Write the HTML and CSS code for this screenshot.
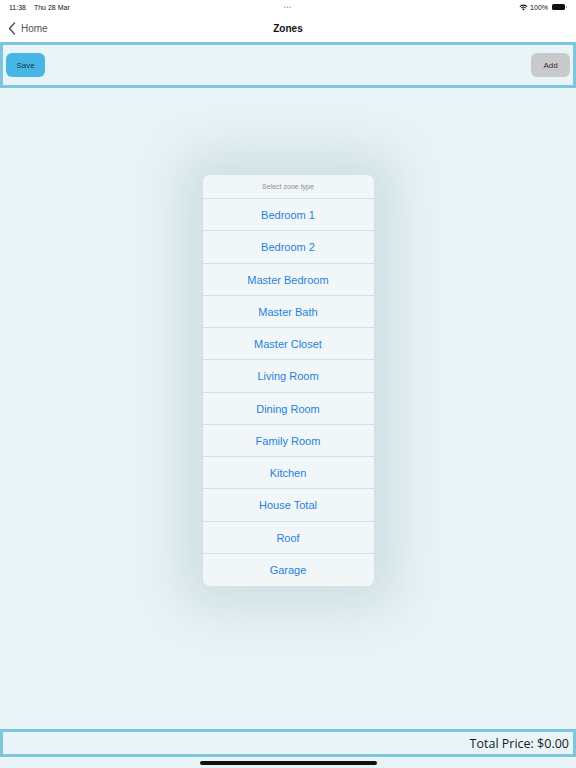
FILE: index.html
```html
<!DOCTYPE html>
<html lang="en">

<head>
    <meta charset="UTF-8">
    <meta name="viewport" content="width=device-width, initial-scale=1.0">
    <title>Zones</title>
    <link rel="stylesheet" href="styles.css">
</head>

<body>
    <div class="statusbar">
        <div class="status-left">
            <span>11:38</span>
            <span class="date">Thu 28 Mar</span>
        </div>
        <div class="dots">&bull;&bull;&bull;</div>
        <div class="status-right">
            <svg width="9" height="7" viewBox="0 0 12 9">
                <path d="M6 8.6 L4.2 6.6 A2.6 2.6 0 0 1 7.8 6.6 Z" fill="#111" />
                <path d="M2.6 4.9 A4.8 4.8 0 0 1 9.4 4.9 L8.5 5.9 A3.5 3.5 0 0 0 3.5 5.9 Z" fill="#111" />
                <path d="M0.6 2.9 A7.6 7.6 0 0 1 11.4 2.9 L10.5 3.9 A6.3 6.3 0 0 0 1.5 3.9 Z" fill="#111" />
            </svg>
            <span>100%</span>
            <span class="battery"></span>
        </div>
    </div>

    <header class="navbar">
        <div class="back">
            <svg width="8" height="13" viewBox="0 0 8 13">
                <path d="M6.5 1 L1.5 6.5 L6.5 12" fill="none" stroke="#555" stroke-width="1.5" stroke-linecap="round" stroke-linejoin="round" />
            </svg>
            <span>Home</span>
        </div>
        <h1>Zones</h1>
    </header>

    <div class="toolbar">
        <button class="btn btn-save">Save</button>
        <button class="btn btn-add">Add</button>
    </div>

    <main class="content">
        <div class="picker">
            <div class="picker-title">Select zone type</div>
            <ul>
                <li>Bedroom 1</li>
                <li>Bedroom 2</li>
                <li>Master Bedroom</li>
                <li>Master Bath</li>
                <li>Master Closet</li>
                <li>Living Room</li>
                <li>Dining Room</li>
                <li>Family Room</li>
                <li>Kitchen</li>
                <li>House Total</li>
                <li>Roof</li>
                <li>Garage</li>
            </ul>
        </div>
    </main>

    <footer class="total">Total Price: $0.00</footer>
    <div class="home-bar"><span></span></div>
</body>

</html>
```

FILE: styles.css
```css
* {
    box-sizing: border-box;
}

html,
body {
    margin: 0;
    padding: 0;
}

body {
    width: 576px;
    height: 768px;
    background: #e8f3f6;
    font-family: "Liberation Sans", Arial, sans-serif;
    display: flex;
    flex-direction: column;
    overflow: hidden;
}

ul {
    margin: 0;
    padding: 0;
    list-style: none;
}

.statusbar {
    height: 14px;
    background: #fff;
    display: grid;
    grid-template-columns: 1fr auto 1fr;
    align-items: center;
    padding: 0 9px;
    font-size: 7px;
    color: #111;
}

.status-left .date {
    margin-left: 6px;
}

.dots {
    color: #999;
    font-size: 5px;
    letter-spacing: 1px;
}

.status-right {
    display: flex;
    align-items: center;
    justify-content: flex-end;
    gap: 2px;
}

.battery {
    width: 13px;
    height: 6px;
    margin-left: 2px;
    margin-right: 2px;
    border-radius: 1.5px;
    background: #111;
    position: relative;
}

.battery::after {
    content: "";
    position: absolute;
    right: -2px;
    top: 2px;
    width: 1px;
    height: 2px;
    background: #aaa;
}

.navbar {
    height: 28px;
    background: #fff;
    position: relative;
    display: flex;
    align-items: center;
    justify-content: center;
}

.back {
    position: absolute;
    left: 8px;
    top: 8px;
    display: flex;
    align-items: center;
    gap: 5px;
    font-size: 10px;
    color: #555;
}

.navbar h1 {
    margin: 0;
    font-size: 10px;
    font-weight: bold;
    color: #111;
}

.toolbar {
    height: 46px;
    border: 3px solid #7ec6df;
    background: #e8f4f7;
    display: flex;
    align-items: center;
    justify-content: space-between;
    padding: 0 3px;
}

.btn {
    width: 39px;
    height: 24px;
    border: none;
    border-radius: 6px;
    font-family: "Liberation Sans", Arial, sans-serif;
    font-size: 8px;
    padding: 0;
}

.btn-save {
    background: #47b6e5;
    color: #123a55;
}

.btn-add {
    background: #c8c9ca;
    color: #333;
}

.content {
    flex: 1;
    display: flex;
    justify-content: center;
    padding-top: 87px;
}

.picker {
    width: 171px;
    height: 411px;
    background: #f1f6f8;
    border-radius: 7px;
    box-shadow: 0 0 50px 20px rgba(170, 195, 200, 0.45);
    overflow: hidden;
}

.picker-title {
    height: 24px;
    line-height: 24px;
    text-align: center;
    font-size: 7px;
    color: #8a8f93;
    border-bottom: 1px solid #d6dee2;
}

.picker li {
    height: 32.25px;
    line-height: 32px;
    text-align: center;
    font-size: 11px;
    color: #1f82dc;
    border-bottom: 1px solid #d6dee2;
}

.picker li:last-child {
    border-bottom: none;
}

.total {
    height: 28px;
    margin-bottom: 3px;
    border: 3px solid #7ec6df;
    background: #e8f4f7;
    display: flex;
    align-items: center;
    justify-content: flex-end;
    padding-right: 4px;
    font-family: "Open Sans", "Liberation Sans", sans-serif;
    font-size: 12.5px;
    color: #1a1a1a;
}

.home-bar {
    height: 8px;
    display: flex;
    justify-content: center;
    padding-top: 1px;
}

.home-bar span {
    width: 177px;
    height: 3.5px;
    border-radius: 2px;
    background: #111;
}
```
